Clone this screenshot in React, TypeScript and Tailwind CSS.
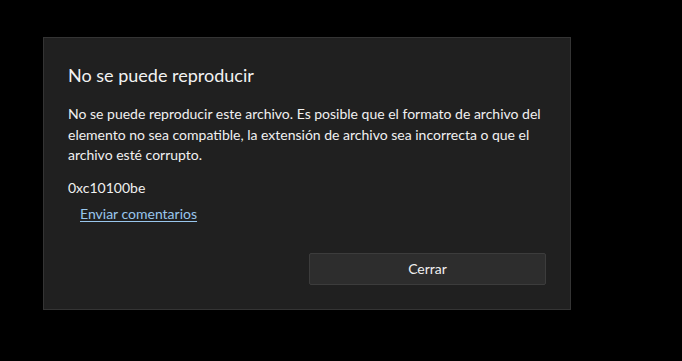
import React from "react";

export default function App() {
  return (
    <div className="w-[682px] h-[361px] bg-black pt-[37px] pl-[43px]" style={{ fontFamily: 'Lato, "Noto Sans", sans-serif' }}>
      <div className="w-[528px] h-[273px] bg-[#202020] border border-[#343434] flex flex-col pl-[24px] pr-[24px]">
        <div className="mt-[24px] text-[18px] leading-[26px] text-[#f2f2f2]">No se puede reproducir</div>
        <p className="mt-[16px] text-[14px] leading-[20.5px] text-[#f0f0f0] w-[480px]">
          No se puede reproducir este archivo. Es posible que el formato de archivo del elemento no sea compatible, la extensión de archivo sea incorrecta o que el archivo esté corrupto.
        </p>
        <div className="mt-[12px] text-[14px] leading-[20px] text-[#f0f0f0]">0xc10100be</div>
        <a className="mt-[6px] ml-[12px] text-[14px] leading-[20px] text-[#99c6ec] underline underline-offset-2 self-start" href="#">Enviar comentarios</a>
        <div className="mt-[29px] flex justify-end">
          <button className="w-[237px] h-[32px] bg-[#2d2d2d] border border-[#3c3c3c] rounded-[2px] text-[14px] text-[#f0f0f0]">Cerrar</button>
        </div>
      </div>
    </div>
  );
}
